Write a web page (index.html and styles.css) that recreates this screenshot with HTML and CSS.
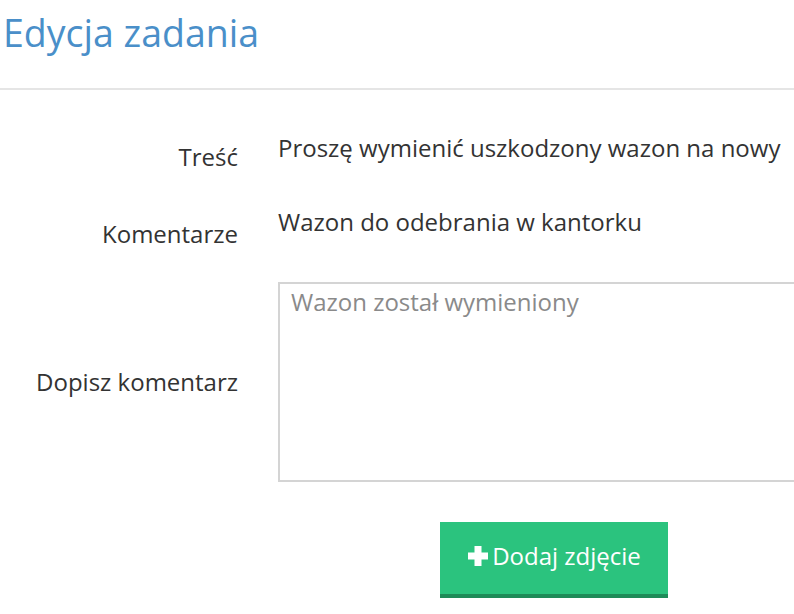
FILE: index.html
```html
<!DOCTYPE html>
<html lang="pl">
<head>
<meta charset="utf-8">
<title>Edycja zadania</title>
<link rel="stylesheet" href="styles.css">
</head>
<body>
<div class="page">
  <h1 class="title">Edycja zadania</h1>
  <hr class="divider">
  <form class="form">
    <div class="row row-tresc">
      <div class="label">Treść</div>
      <div class="value">Proszę wymienić uszkodzony wazon na nowy</div>
    </div>
    <div class="row row-kom">
      <div class="label">Komentarze</div>
      <div class="value">Wazon do odebrania w kantorku</div>
    </div>
    <div class="row row-area">
      <div class="label">Dopisz komentarz</div>
      <textarea class="area" placeholder="Wazon został wymieniony"></textarea>
    </div>
    <div class="actions">
      <button type="button" class="btn">
        <svg class="plus" width="22" height="22" viewBox="0 0 22 22"><path d="M7.5 1h7v6.5H21v7h-6.5V21h-7v-6.5H1v-7h6.5z" fill="#fff"/></svg>
        <span>Dodaj zdjęcie</span>
      </button>
    </div>
  </form>
</div>
</body>
</html>
```

FILE: styles.css
```css
html, body {
  margin: 0;
  padding: 0;
  background: #fff;
  overflow: hidden;
}
.page {
  font-family: "Open Sans", "Liberation Sans", sans-serif;
  color: #333;
  width: 794px;
  height: 614px;
  overflow: hidden;
}
.title {
  margin: 0;
  padding: 8px 0 0 3px;
  height: 88px;
  box-sizing: border-box;
  font-weight: 400;
  font-size: 37.5px;
  line-height: 50px;
  color: #4a8fc9;
}
.divider {
  margin: 0;
  border: 0;
  height: 2px;
  background: #e5e5e5;
  width: 100%;
}
.form {
  padding-top: 42px;
}
.row {
  display: grid;
  grid-template-columns: 238px 1fr;
  column-gap: 40px;
  font-size: 24px;
  line-height: 32px;
}
.label {
  text-align: right;
  white-space: nowrap;
}
.value {
  white-space: nowrap;
}
.row-tresc .label {
  padding-top: 9px;
}
.row-kom {
  margin-top: 33px;
}
.row-kom .label {
  padding-top: 12px;
}
.row-area {
  margin-top: 32px;
  align-items: center;
}
.area {
  display: block;
  width: 540px;
  height: 200px;
  box-sizing: border-box;
  border: 2px solid #d4d4d4;
  border-radius: 0;
  padding: 2px 11px;
  margin: 0;
  font-family: "Open Sans", "Liberation Sans", sans-serif;
  font-size: 24px;
  line-height: 32px;
  color: #333;
  resize: none;
  outline: none;
}
.area::placeholder {
  color: #8a8a8a;
  opacity: 1;
}
.actions {
  margin-top: 40px;
  padding-left: 440px;
}
.btn {
  display: flex;
  align-items: center;
  justify-content: center;
  gap: 3px;
  width: 228px;
  height: 76px;
  box-sizing: border-box;
  margin: 0;
  padding: 0 0 4px 0;
  border: 0;
  border-bottom: 4px solid #1e8b58;
  background: #2bc37e;
  color: #fff;
  font-family: "Open Sans", "Liberation Sans", sans-serif;
  font-size: 24px;
  line-height: 32px;
  cursor: pointer;
}
.plus {
  display: block;
  margin-top: -1px;
}
```
